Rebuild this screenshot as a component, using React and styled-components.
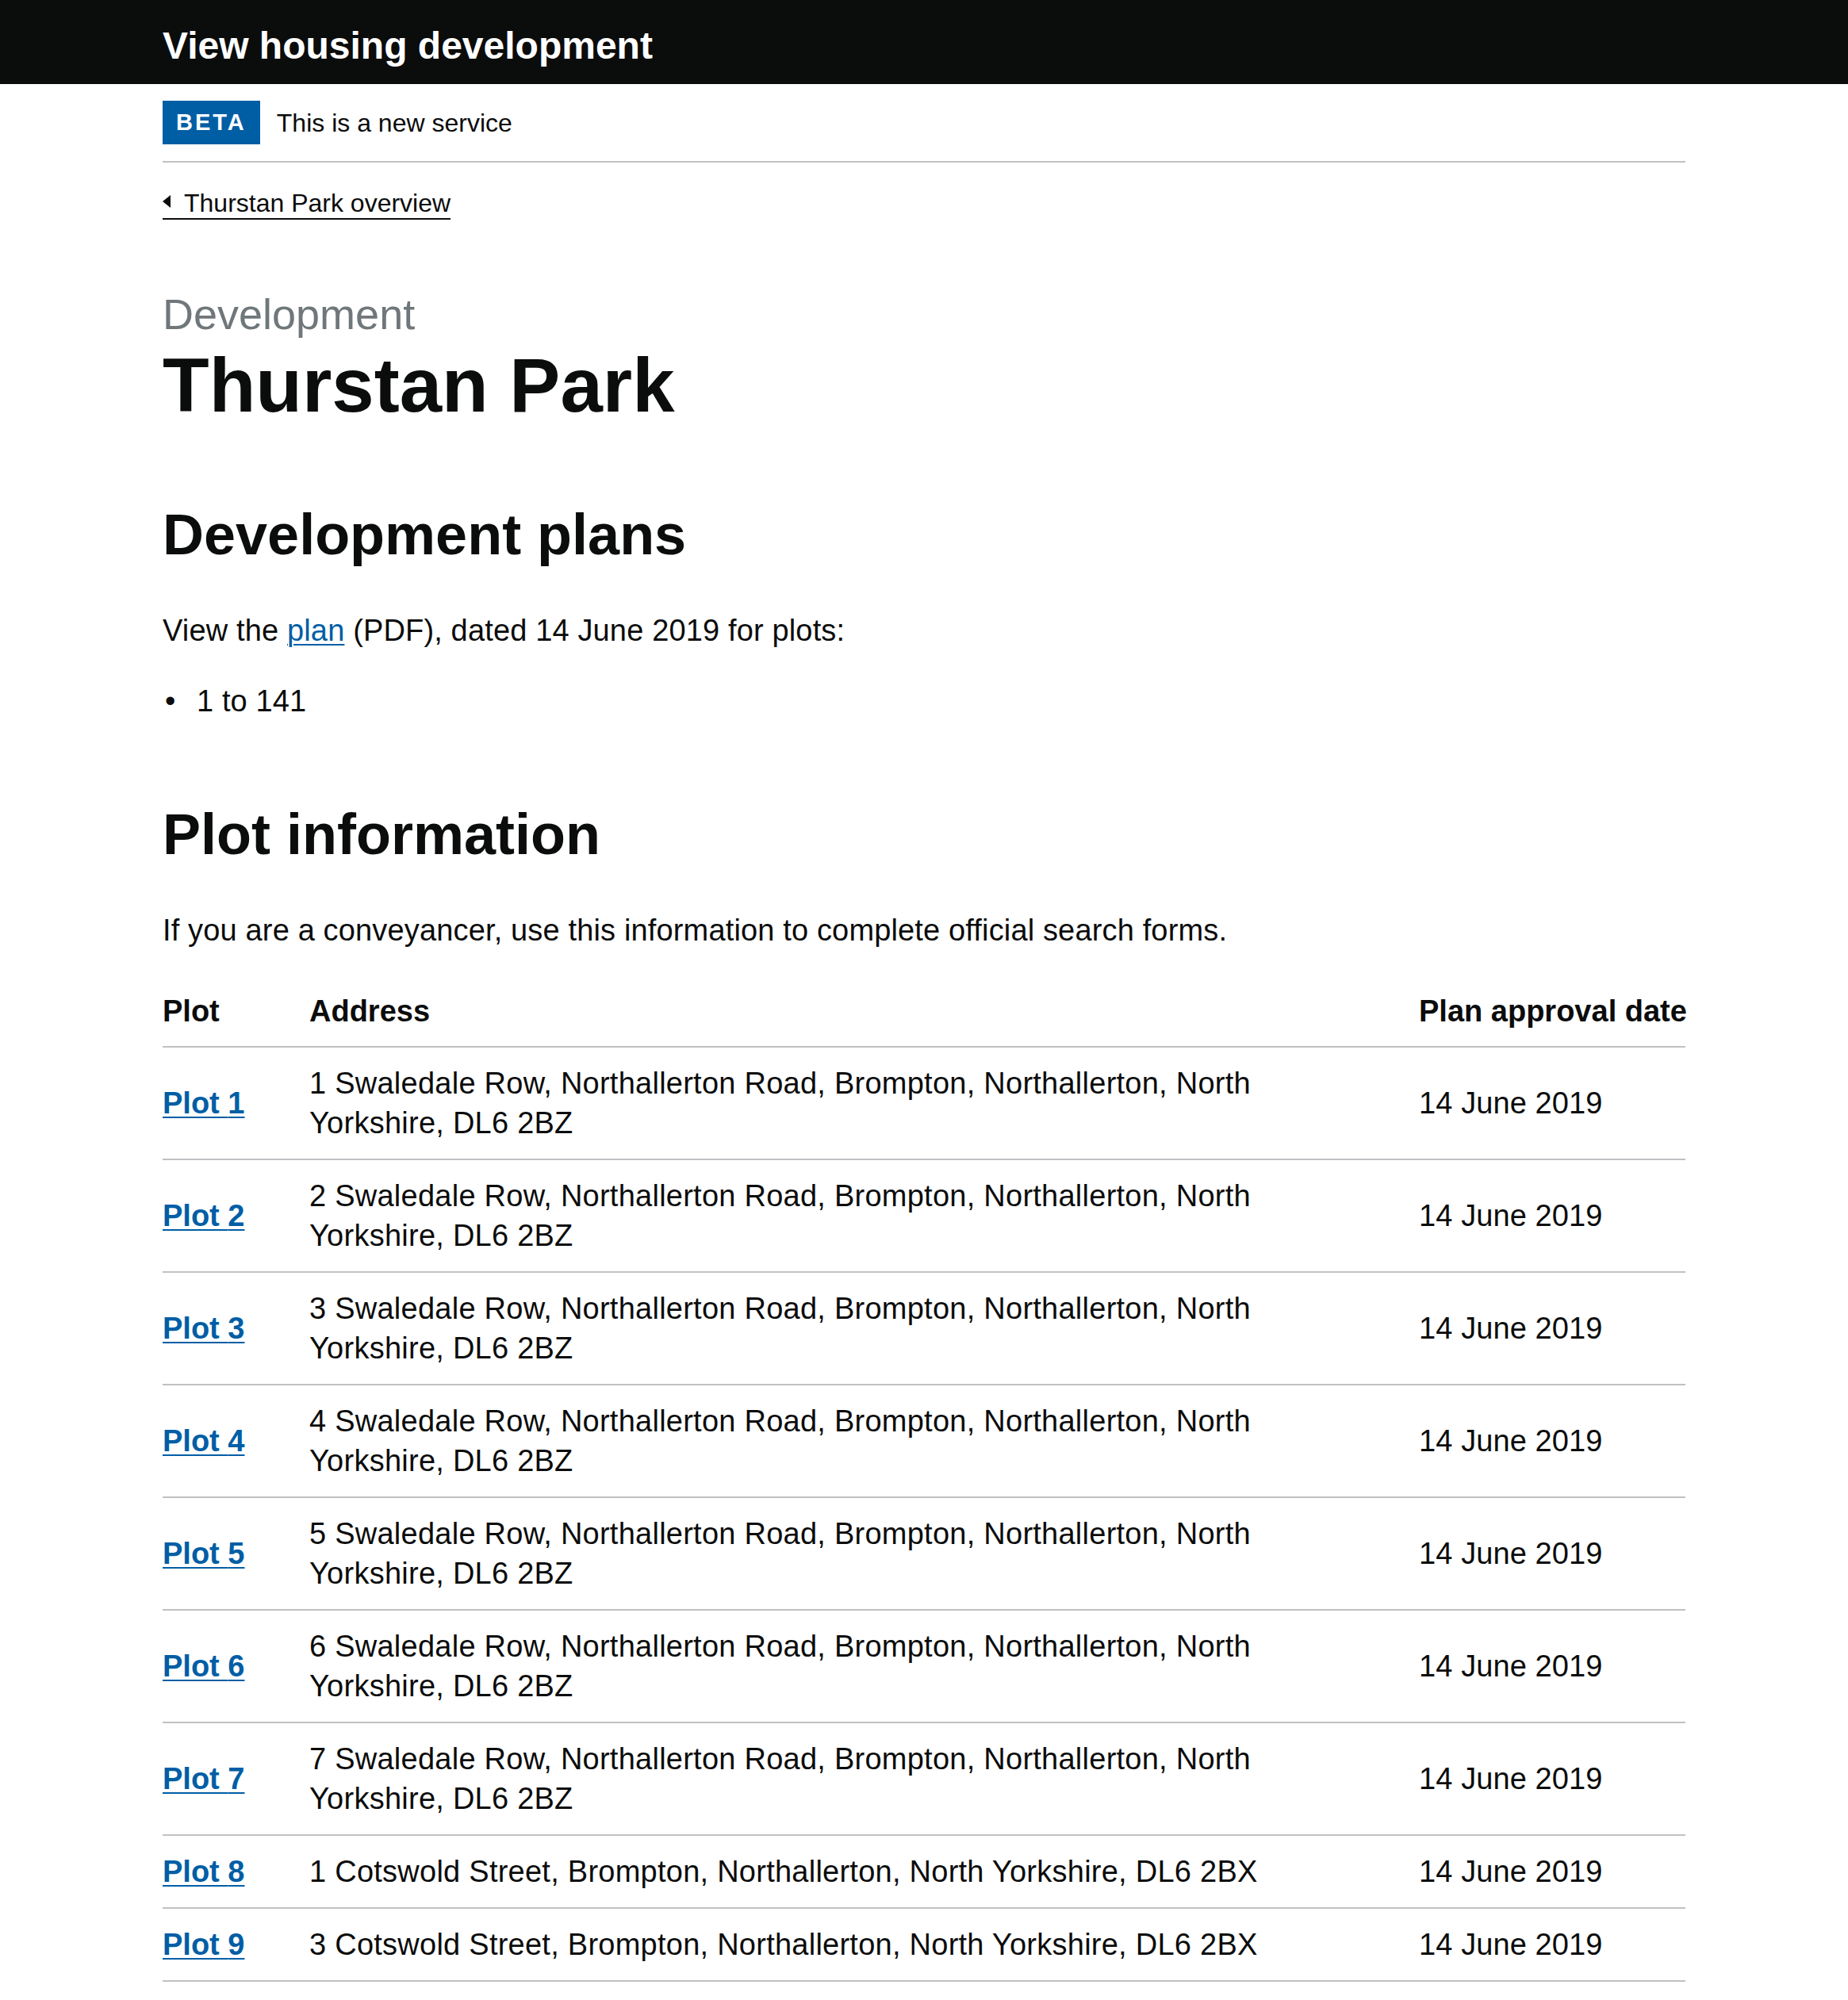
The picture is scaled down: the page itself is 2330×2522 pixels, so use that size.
import React from "react";
import styled, { createGlobalStyle } from "styled-components";

const GlobalStyle = createGlobalStyle`
  html, body {
    margin: 0;
    padding: 0;
    background: #ffffff;
  }
  body {
    font-family: "Liberation Sans", Arial, Helvetica, sans-serif;
    color: #0b0c0c;
  }
  * { box-sizing: border-box; }
`;

const Header = styled.header`
  background: #0b0c0c;
  height: 106px;
  padding-top: 28px;
`;

const Container = styled.div`
  width: 1920px;
  margin: 0 auto;
`;

const ServiceName = styled.div`
  color: #ffffff;
  font-weight: 700;
  font-size: 48px;
  line-height: 60px;
`;

const PhaseBanner = styled.div`
  display: flex;
  align-items: center;
  padding: 21px 0;
  border-bottom: 2px solid #bfc1c3;
`;

const Tag = styled.strong`
  display: inline-flex;
  align-items: center;
  height: 55px;
  padding: 0 17px 0 17px;
  margin-right: 21px;
  background: #005ea5;
  color: #ffffff;
  font-weight: 700;
  font-size: 29px;
  letter-spacing: 3px;
  text-transform: uppercase;
`;

const BannerText = styled.span`
  font-size: 32px;
  line-height: 40px;
`;

const BackLink = styled.a`
  display: inline-flex;
  align-items: center;
  margin-top: 32px;
  font-size: 32px;
  line-height: 38px;
  color: #0b0c0c;
  text-decoration: none;
  border-bottom: 2px solid #0b0c0c;

  &::before {
    content: "";
    display: block;
    width: 0;
    height: 0;
    margin-right: 17px;
    margin-bottom: 4px;
    border-top: 8px solid transparent;
    border-bottom: 8px solid transparent;
    border-right: 10px solid #0b0c0c;
  }
`;

const Main = styled.main`
  padding-top: 89px;
  padding-bottom: 60px;
`;

const Caption = styled.span`
  display: block;
  font-size: 54px;
  line-height: 60px;
  color: #6f777b;
  margin-bottom: 10px;
`;

const Title = styled.h1`
  margin: 0 0 98px;
  font-size: 96px;
  line-height: 100px;
  font-weight: 700;
`;

const SectionHeading = styled.h2`
  margin: ${(p) => (p.$spaced ? "103px" : "0")} 0 56px;
  font-size: 72px;
  line-height: 80px;
  font-weight: 700;
`;

const Body = styled.p`
  margin: 0 0 ${(p) => p.$gap || 39}px;
  font-size: 38px;
  line-height: 50px;
  letter-spacing: 0.15px;
`;

const Link = styled.a`
  color: #005ea5;
  text-decoration: underline;
  text-decoration-thickness: 2px;
  text-underline-offset: 4px;
  font-weight: ${(p) => (p.$bold ? 700 : 400)};
  letter-spacing: ${(p) => (p.$bold ? "0" : "inherit")};
`;

const BulletList = styled.ul`
  margin: 0;
  padding-left: 40px;
  list-style: none;
  font-size: 38px;
  line-height: 50px;
  letter-spacing: 0.1px;
`;

const BulletItem = styled.li`
  display: flex;

  &::before {
    content: "•";
    flex: none;
    width: 40px;
    margin-left: -40px;
    padding-left: 3px;
  }
`;

const Table = styled.table`
  width: 100%;
  table-layout: fixed;
  border-collapse: collapse;
  border-spacing: 0;
  font-size: 38px;
  line-height: 50px;
`;

const Col = styled.col`
  width: ${(p) => p.$w}px;
`;

const HeadCell = styled.th`
  text-align: left;
  font-weight: 700;
  padding: 21px 40px 19px 0;
  border-bottom: 2px solid #bfc1c3;
  vertical-align: middle;
  white-space: nowrap;

  &:last-child { padding-right: 0; }
`;

const Cell = styled.td`
  padding: 20px ${(p) => p.$padRight ?? 40}px 20px 0;
  border-bottom: 2px solid #bfc1c3;
  vertical-align: middle;
  letter-spacing: ${(p) => p.$spacing ?? 0.25}px;

  &:last-child { padding-right: 0; }
`;

const plots = [
  "1 Swaledale Row, Northallerton Road, Brompton, Northallerton, North Yorkshire, DL6 2BZ",
  "2 Swaledale Row, Northallerton Road, Brompton, Northallerton, North Yorkshire, DL6 2BZ",
  "3 Swaledale Row, Northallerton Road, Brompton, Northallerton, North Yorkshire, DL6 2BZ",
  "4 Swaledale Row, Northallerton Road, Brompton, Northallerton, North Yorkshire, DL6 2BZ",
  "5 Swaledale Row, Northallerton Road, Brompton, Northallerton, North Yorkshire, DL6 2BZ",
  "6 Swaledale Row, Northallerton Road, Brompton, Northallerton, North Yorkshire, DL6 2BZ",
  "7 Swaledale Row, Northallerton Road, Brompton, Northallerton, North Yorkshire, DL6 2BZ",
  "1 Cotswold Street, Brompton, Northallerton, North Yorkshire, DL6 2BX",
  "3 Cotswold Street, Brompton, Northallerton, North Yorkshire, DL6 2BX",
];

export default function App() {
  return (
    <>
      <GlobalStyle />
      <Header>
        <Container>
          <ServiceName>View housing development</ServiceName>
        </Container>
      </Header>
      <Container>
        <PhaseBanner>
          <Tag>Beta</Tag>
          <BannerText>This is a new service</BannerText>
        </PhaseBanner>
        <BackLink href="#">Thurstan Park overview</BackLink>
        <Main>
          <Caption>Development</Caption>
          <Title>Thurstan Park</Title>

          <SectionHeading>Development plans</SectionHeading>
          <Body>
            View the <Link href="#">plan</Link> (PDF), dated 14 June 2019 for plots:
          </Body>
          <BulletList>
            <BulletItem>1 to 141</BulletItem>
          </BulletList>

          <SectionHeading $spaced>Plot information</SectionHeading>
          <Body $gap={31}>
            If you are a conveyancer, use this information to complete official search forms.
          </Body>
          <Table>
            <colgroup>
              <Col $w={185} />
              <Col $w={1399} />
              <Col $w={336} />
            </colgroup>
            <thead>
              <tr>
                <HeadCell>Plot</HeadCell>
                <HeadCell>Address</HeadCell>
                <HeadCell>Plan approval date</HeadCell>
              </tr>
            </thead>
            <tbody>
              {plots.map((address, i) => (
                <tr key={i}>
                  <Cell>
                    <Link href="#" $bold>
                      Plot {i + 1}
                    </Link>
                  </Cell>
                  <Cell $padRight={48}>{address}</Cell>
                  <Cell $spacing={0.1}>14 June 2019</Cell>
                </tr>
              ))}
            </tbody>
          </Table>
        </Main>
      </Container>
    </>
  );
}
